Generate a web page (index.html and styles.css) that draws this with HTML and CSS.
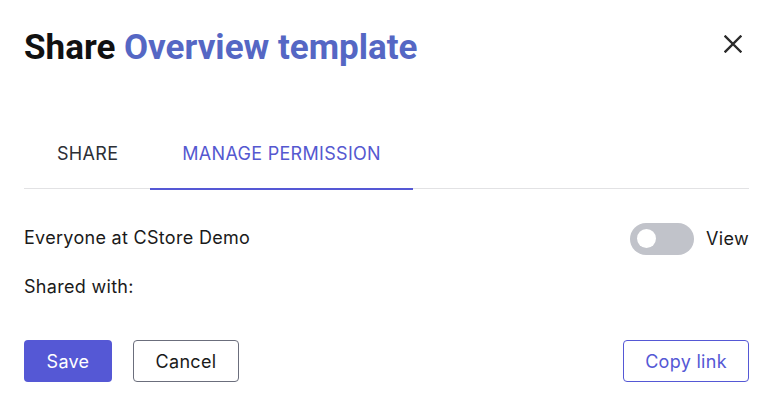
FILE: index.html
```html
<!DOCTYPE html>
<html>
<head>
<meta charset="utf-8">
<link rel="stylesheet" href="styles.css">
</head>
<body>
<div class="dialog">
  <div class="header">
    <h1 class="title">Share <span class="accent">Overview template</span></h1>
    <button class="close" aria-label="Close">
      <svg width="18" height="18" viewBox="0 0 18 18"><path d="M1.5 1.5 L16.5 16.5 M16.5 1.5 L1.5 16.5" stroke="#2b2b2b" stroke-width="2.4" stroke-linecap="square"/></svg>
    </button>
  </div>
  <div class="tabs">
    <div class="tab">SHARE</div>
    <div class="tab active">MANAGE PERMISSION</div>
  </div>
  <div class="row">
    <span class="label">Everyone at CStore Demo</span>
    <div class="perm">
      <span class="toggle"><span class="knob"></span></span>
      <span class="label">View</span>
    </div>
  </div>
  <div class="shared label">Shared with:</div>
  <div class="actions">
    <div class="left">
      <button class="btn primary">Save</button>
      <button class="btn outline">Cancel</button>
    </div>
    <button class="btn link">Copy link</button>
  </div>
</div>
</body>
</html>
```
FILE: styles.css
```css
* { box-sizing: border-box; }
html, body { margin: 0; padding: 0; background: #fff; }
body { font-family: Inter, "Noto Sans", sans-serif; color: #1f1f1f; }
.dialog { width: 772px; height: 408px; padding: 0 23px 0 24px; }
.header { display: flex; justify-content: space-between; align-items: flex-start; padding-top: 28px; height: 117px; }
.title { margin: 0; font-family: Roboto, sans-serif; font-weight: 700; font-size: 35px; line-height: 40px; color: #111; }
.accent { color: #5567c4; }
.close { border: 0; background: none; padding: 0; width: 18px; height: 18px; margin-right: 7px; margin-top: 7px; display: flex; }
.tabs { display: flex; border-bottom: 1px solid #e2e2e4; height: 72px; }
.tab { padding: 0 32px 0 33px; height: 72px; display: flex; align-items: center; font-size: 18px; color: #2c2f36; letter-spacing: 0.3px; border-bottom: 2px solid transparent; padding-top: 2px; }
.tab.active { color: #5558d0; border-bottom-color: #5558d5; padding-left: 32px; margin-bottom: -1px; height: 73px; padding-top: 1px; }
.row { display: flex; justify-content: space-between; align-items: center; margin-top: 32px; height: 32px; }
.label { font-size: 18px; color: #1a1a1a; letter-spacing: 0.3px; }
.perm { display: flex; align-items: center; gap: 12px; margin-top: 3px; }
.toggle { width: 64px; height: 32px; border-radius: 16px; background: #c1c3ca; display: flex; align-items: center; padding-left: 7px; }
.knob { width: 19px; height: 19px; border-radius: 50%; background: #fff; }
.shared { margin-top: 23px; line-height: 22px; }
.actions { display: flex; justify-content: space-between; align-items: center; margin-top: 42px; }
.left { display: flex; gap: 21px; }
.btn { font-family: Inter, sans-serif; font-size: 18px; letter-spacing: 0.3px; height: 42px; border-radius: 4px; padding: 0; background: #fff; cursor: pointer; }
.primary { background: #5558d5; color: #fff; border: 0; width: 88px; }
.outline { border: 1px solid #6b6e7c; color: #1a1a1a; width: 106px; }
.link { border: 1px solid #5558d5; color: #5558d5; width: 126px; }
```
